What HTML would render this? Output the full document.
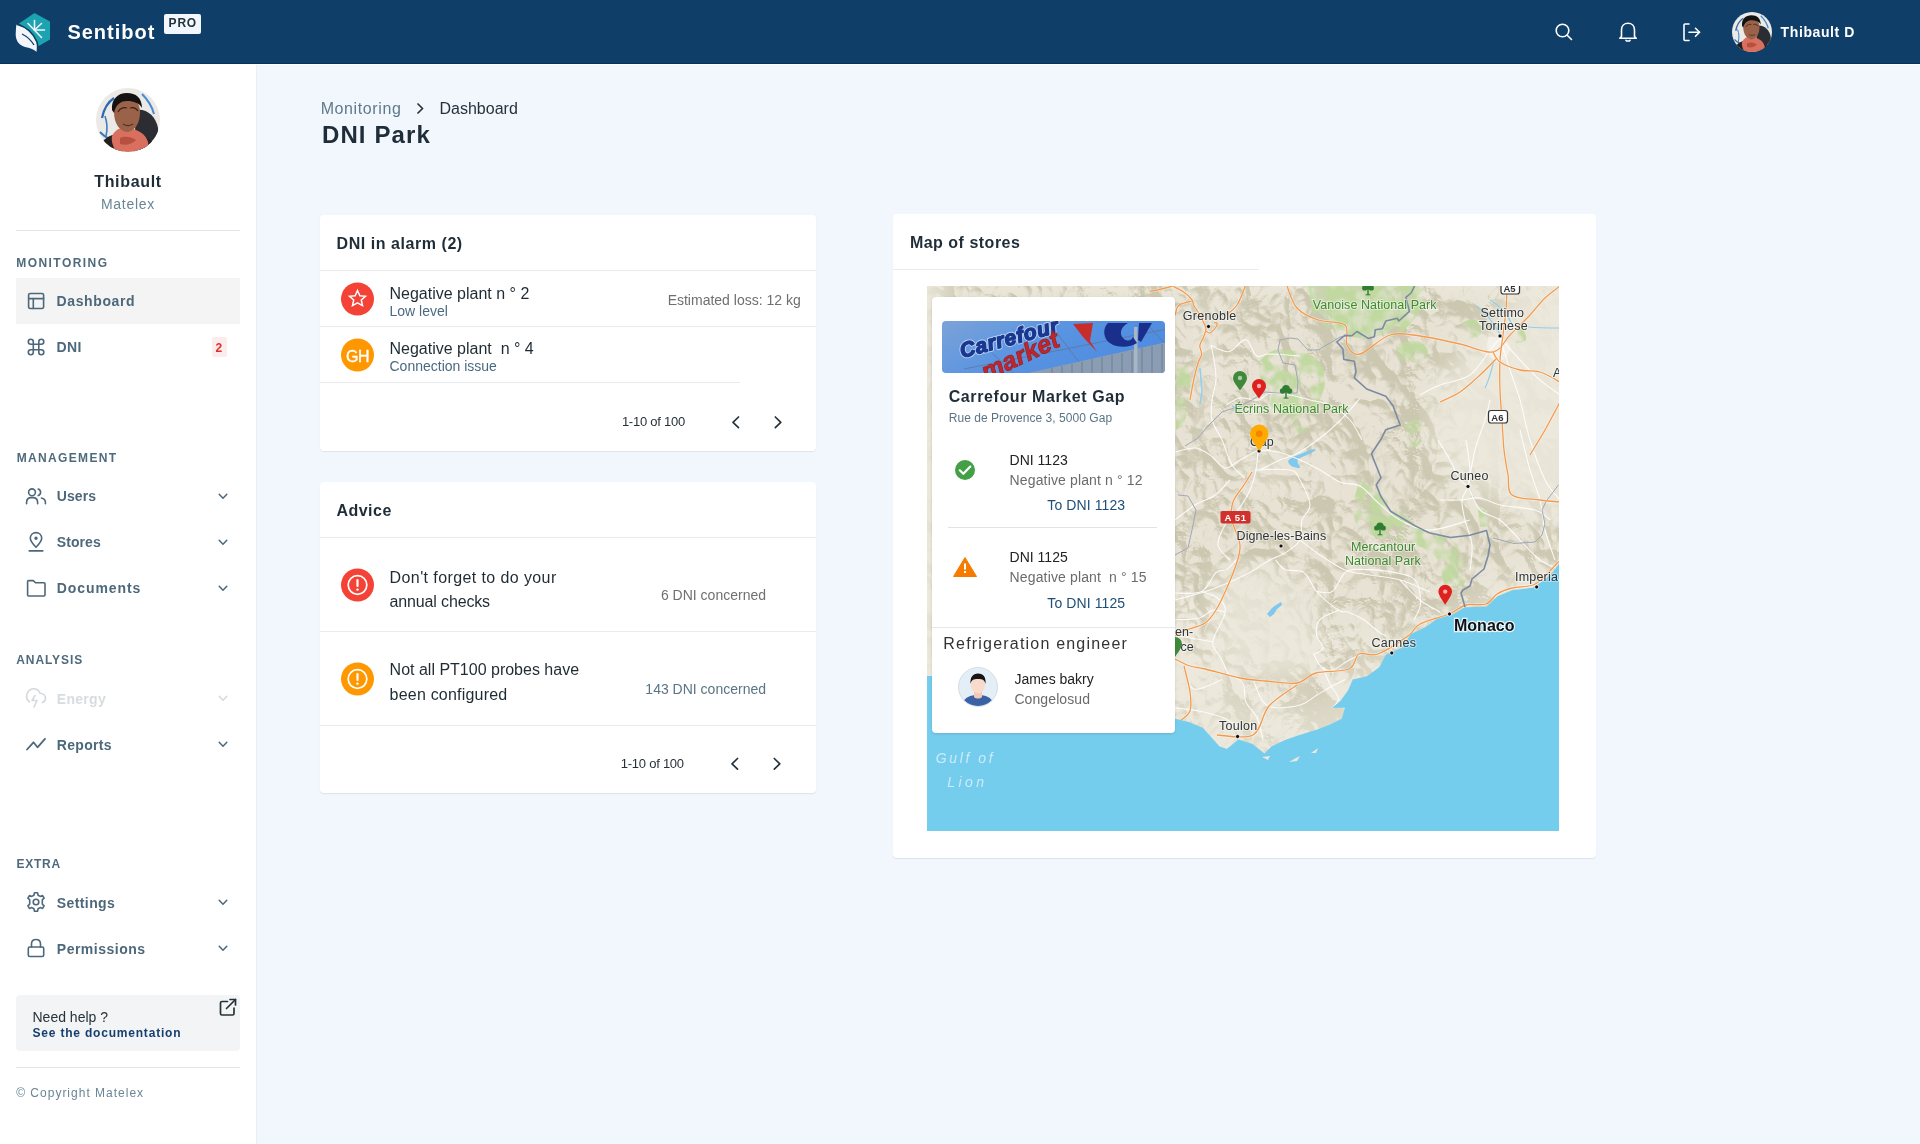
<!DOCTYPE html>
<html><head><meta charset="utf-8">
<style>
*{margin:0;padding:0;box-sizing:border-box}
html,body{width:1920px;height:1144px;overflow:hidden}
body{position:relative;will-change:transform;background:#F2F6FD;font-family:"Liberation Sans",sans-serif;color:#1F2D38}
.a{position:absolute;white-space:pre;line-height:1}
.hdr{position:absolute;left:0;top:0;width:1920px;height:64px;background:#0F3F68}
.side{position:absolute;left:0;top:64px;width:256px;height:1080px;background:#FFFFFF}
.card{position:absolute;background:#fff;border-radius:4px;box-shadow:0 1px 1px rgba(40,60,90,0.10)}
.hr{position:absolute;height:1px;background:#E9EBEE}
svg{position:absolute;overflow:visible}
</style></head><body>
<div class="hdr"></div>
<div style="position:absolute;left:0;top:63px;width:1920px;height:1px;background:#02325F"></div>
<div style="position:absolute;left:0;top:64px;width:1920px;height:1px;background:#fff"></div>
<svg style="left:0;top:0" width="64" height="64" viewBox="0 0 64 64">
<polygon points="34.5,13 50,21.5 50,39.5 37,47 29,30 19,23.5" fill="#1BA3B0"/>
<path d="M16.5 24.5 C26 27 33 33.5 36.5 42 C37.5 45 37 49 36.8 52 C33 49 30 48 25 47 C18 45 15 39 15.8 32 C16 29 16 26.5 16.5 24.5 Z" fill="#F2F5FC"/>
<path d="M16.8 24.2 C26.5 26.8 33.6 33.4 37 42 C38 45 37.6 49 37.4 52.5" fill="none" stroke="#0F3F68" stroke-width="1.6"/>
<path d="M22 34 C27 36.5 31 40 34 45" fill="none" stroke="#0F3F68" stroke-width="1.3"/>
<g stroke="#F2F5FC" stroke-width="1.5" stroke-linecap="round">
<line x1="34.5" y1="20.5" x2="34.5" y2="30"/>
<line x1="28" y1="23.5" x2="41.5" y2="37.5"/>
<line x1="34.5" y1="30" x2="44.5" y2="30"/>
<line x1="34.5" y1="30" x2="41.5" y2="23.5"/>
</g>
</svg>
<div class="a" style="left:67.4px;top:21.9px;font-size:20px;color:#FFFFFF;font-weight:700;letter-spacing:1.0px;">Sentibot</div>
<div style="position:absolute;left:163.5px;top:14px;width:37.5px;height:19.5px;background:#F2F6FD;border-radius:2px"></div>
<div class="a" style="left:168.6px;top:17.2px;font-size:12px;color:#23313B;font-weight:700;letter-spacing:0.8px;">PRO</div>
<svg style="left:0;top:0" width="1" height="1">
<g fill="none" stroke="#FFFFFF" stroke-width="1.6" stroke-linecap="round" stroke-linejoin="round">
<circle cx="1562.5" cy="30.5" r="6.3"/>
<line x1="1567.2" y1="35.2" x2="1571.5" y2="39.5"/>
<path d="M1621.5 36.5 L1621.5 30 C1621.5 26 1624.3 23.3 1628 23.3 C1631.7 23.3 1634.5 26 1634.5 30 L1634.5 36.5 L1636.2 38.3 L1619.8 38.3 Z"/>
<path d="M1626 40.3 C1626.5 41.3 1629.5 41.3 1630 40.3"/>
<path d="M1689 24 L1685 24 C1684.3 24 1684 24.3 1684 25 L1684 39.5 C1684 40.2 1684.3 40.5 1685 40.5 L1689 40.5"/>
<line x1="1689" y1="32.3" x2="1699.5" y2="32.3"/>
<path d="M1695.5 28.3 L1699.5 32.3 L1695.5 36.3"/>
</g>
</svg>
<div class="a" style="left:1780.6px;top:25.0px;font-size:14px;color:#FFFFFF;font-weight:700;letter-spacing:0.6px;">Thibault D</div>
<div class="side"></div>
<div style="position:absolute;left:256px;top:65px;width:1px;height:1079px;background:#E9EEF7"></div>
<div style="position:absolute;left:96px;top:88px;width:64px;height:64px;border-radius:50%;overflow:hidden">
<svg style="left:0;top:0" width="64" height="64" viewBox="0 0 64 64"><rect width="64" height="64" fill="#ECEAE6"/>
<path d="M6 30 C8 20 12 14 18 10" stroke="#2F69B0" stroke-width="2.2" fill="none"/>
<path d="M10 48 C12 40 11 34 9 28" stroke="#3C7FC2" stroke-width="1.6" fill="none"/>
<path d="M46 6 C52 12 56 18 58 26" stroke="#4A8AD0" stroke-width="2" fill="none"/>
<path d="M54 30 C58 36 60 42 60 50" stroke="#2E5E98" stroke-width="2" fill="none"/>
<path d="M4 44 C10 50 14 52 20 50" stroke="#3A78BC" stroke-width="2" fill="none"/>
<path d="M40 22 C50 20 60 28 62 40 L64 64 L38 64 Z" fill="#2B2D33"/>
<path d="M2 64 C4 54 10 48 20 46 L30 46 L26 64 Z" fill="#231F1E"/>
<path d="M46 48 C54 50 60 56 62 64 L44 64 Z" fill="#262322"/>
<path d="M16 48 C20 40 28 38 34 40 C42 42 50 46 52 54 C53 58 52 62 50 64 L20 64 C17 58 15 53 16 48 Z" fill="#D9705F"/>
<path d="M24 50 C28 48 34 48 40 52 C36 56 30 58 24 56 Z" fill="#B7503F"/>
<path d="M18 24 C18 14 24 10 31 10 C39 10 44 15 44 24 C44 34 40 42 32 44 C24 44 18 36 18 24 Z" fill="#9A6248"/>
<path d="M22 24 C24 20 28 19 31 20 M34 20 C37 19 40 20 42 23" stroke="#3A2418" stroke-width="1.2" fill="none"/>
<path d="M27 36 C30 38 34 38 37 36" stroke="#5A3022" stroke-width="1.3" fill="none"/>
<path d="M16 22 C15 11 22 5 31 5 C40 5 46 10 46 20 C43 15 38 13 31 13 C25 13 20 16 18 25 Z" fill="#151212"/>
</svg></div>
<div style="position:absolute;left:1732px;top:12px;width:40px;height:40px;border-radius:50%;overflow:hidden">
<svg style="left:0;top:0" width="40" height="40" viewBox="0 0 64 64"><rect width="64" height="64" fill="#ECEAE6"/>
<path d="M6 30 C8 20 12 14 18 10" stroke="#2F69B0" stroke-width="2.2" fill="none"/>
<path d="M10 48 C12 40 11 34 9 28" stroke="#3C7FC2" stroke-width="1.6" fill="none"/>
<path d="M46 6 C52 12 56 18 58 26" stroke="#4A8AD0" stroke-width="2" fill="none"/>
<path d="M54 30 C58 36 60 42 60 50" stroke="#2E5E98" stroke-width="2" fill="none"/>
<path d="M4 44 C10 50 14 52 20 50" stroke="#3A78BC" stroke-width="2" fill="none"/>
<path d="M40 22 C50 20 60 28 62 40 L64 64 L38 64 Z" fill="#2B2D33"/>
<path d="M2 64 C4 54 10 48 20 46 L30 46 L26 64 Z" fill="#231F1E"/>
<path d="M46 48 C54 50 60 56 62 64 L44 64 Z" fill="#262322"/>
<path d="M16 48 C20 40 28 38 34 40 C42 42 50 46 52 54 C53 58 52 62 50 64 L20 64 C17 58 15 53 16 48 Z" fill="#D9705F"/>
<path d="M24 50 C28 48 34 48 40 52 C36 56 30 58 24 56 Z" fill="#B7503F"/>
<path d="M18 24 C18 14 24 10 31 10 C39 10 44 15 44 24 C44 34 40 42 32 44 C24 44 18 36 18 24 Z" fill="#9A6248"/>
<path d="M22 24 C24 20 28 19 31 20 M34 20 C37 19 40 20 42 23" stroke="#3A2418" stroke-width="1.2" fill="none"/>
<path d="M27 36 C30 38 34 38 37 36" stroke="#5A3022" stroke-width="1.3" fill="none"/>
<path d="M16 22 C15 11 22 5 31 5 C40 5 46 10 46 20 C43 15 38 13 31 13 C25 13 20 16 18 25 Z" fill="#151212"/>
</svg></div>
<div class="a" style="left:-72.0px;width:400px;text-align:center;top:174.4px;font-size:16px;color:#1F2D38;font-weight:700;letter-spacing:0.68px;">Thibault</div>
<div class="a" style="left:-72.0px;width:400px;text-align:center;top:197.1px;font-size:14px;color:#6A8596;letter-spacing:0.74px;">Matelex</div>
<div class="hr" style="left:16px;top:230px;width:224px;background:#E3E5E8"></div>
<div class="a" style="left:16.2px;top:256.8px;font-size:12px;color:#4F6A7C;font-weight:700;letter-spacing:1.45px;">MONITORING</div>
<div style="position:absolute;left:16px;top:278px;width:224px;height:46px;background:#F4F4F4"></div>
<div class="a" style="left:56.6px;top:294.1px;font-size:14px;color:#4D687B;font-weight:700;letter-spacing:0.6px;">Dashboard</div>
<div class="a" style="left:56.6px;top:340.1px;font-size:14px;color:#4D687B;font-weight:700;letter-spacing:0.3px;">DNI</div>
<div style="position:absolute;left:212px;top:337px;width:15px;height:20px;background:#FDECEC;border-radius:2px"></div>
<div class="a" style="left:215.5px;top:341.8px;font-size:12px;color:#E0302B;font-weight:700;">2</div>
<div class="a" style="left:16.7px;top:452.1px;font-size:12px;color:#4F6A7C;font-weight:700;letter-spacing:1.35px;">MANAGEMENT</div>
<div class="a" style="left:56.8px;top:489.1px;font-size:14px;color:#4D687B;font-weight:700;letter-spacing:0.05px;">Users</div>
<div class="a" style="left:56.8px;top:535.1px;font-size:14px;color:#4D687B;font-weight:700;letter-spacing:0.08px;">Stores</div>
<div class="a" style="left:56.8px;top:581.1px;font-size:14px;color:#4D687B;font-weight:700;letter-spacing:0.9px;">Documents</div>
<div class="a" style="left:16.3px;top:654.2px;font-size:12px;color:#4F6A7C;font-weight:700;letter-spacing:0.9px;">ANALYSIS</div>
<div class="a" style="left:56.8px;top:692.3px;font-size:14px;color:#D8DCDF;font-weight:700;letter-spacing:0.3px;">Energy</div>
<div class="a" style="left:56.8px;top:738.1px;font-size:14px;color:#4D687B;font-weight:700;letter-spacing:0.3px;">Reports</div>
<div class="a" style="left:16.5px;top:858.2px;font-size:12px;color:#4F6A7C;font-weight:700;letter-spacing:0.75px;">EXTRA</div>
<div class="a" style="left:56.8px;top:895.9px;font-size:14px;color:#4D687B;font-weight:700;letter-spacing:0.4px;">Settings</div>
<div class="a" style="left:56.8px;top:941.8px;font-size:14px;color:#4D687B;font-weight:700;letter-spacing:0.5px;">Permissions</div>
<div style="position:absolute;left:16px;top:995px;width:224px;height:56px;background:#F3F4F6;border-radius:4px"></div>
<div class="a" style="left:32.5px;top:1010.1px;font-size:14px;color:#26323A;">Need help ?</div>
<div class="a" style="left:32.5px;top:1026.7px;font-size:12px;color:#143F6E;font-weight:700;letter-spacing:0.8px;">See the documentation</div>
<div class="hr" style="left:16px;top:1067px;width:224px;background:#E3E5E8"></div>
<svg style="left:0;top:0" width="1" height="1">
<g fill="none" stroke="#4D687B" stroke-width="1.6" stroke-linecap="round" stroke-linejoin="round">
<!-- dashboard -->
<rect x="28.6" y="293.5" width="15" height="15" rx="1.6"/>
<line x1="28.6" y1="298.6" x2="43.6" y2="298.6"/>
<line x1="33.3" y1="298.6" x2="33.3" y2="308.5"/>
<!-- DNI command -->
<path d="M33.3 344.3 L38.8 344.3 L38.8 349.8 L33.3 349.8 Z"/>
<path d="M33.3 344.3 L33.3 341.8 A2.5 2.5 0 1 0 30.8 344.3 Z"/>
<path d="M38.8 344.3 L38.8 341.8 A2.5 2.5 0 1 1 41.3 344.3 Z"/>
<path d="M33.3 349.8 L33.3 352.3 A2.5 2.5 0 1 1 30.8 349.8 Z"/>
<path d="M38.8 349.8 L38.8 352.3 A2.5 2.5 0 1 0 41.3 349.8 Z"/>
<!-- users -->
<circle cx="32" cy="492.3" r="3.4"/>
<path d="M26.6 503.8 L26.6 502.3 C26.6 499.3 28.6 497.6 31.3 497.6 L32.8 497.6 C35.6 497.6 37.6 499.3 37.6 502.3 L37.6 503.8"/>
<path d="M38.2 489 C40 489.6 40.6 491 40.6 492.3 C40.6 493.6 40 495 38.2 495.6"/>
<path d="M41.5 498 C44 498.6 45.4 500.3 45.4 502.3 L45.4 503.8"/>
<!-- stores -->
<path d="M36 547.3 C36 547.3 30.3 541.5 30.3 538.3 C30.3 535 32.8 532.6 36 532.6 C39.2 532.6 41.7 535 41.7 538.3 C41.7 541.5 36 547.3 36 547.3 Z"/>
<circle cx="36" cy="538.3" r="0.9" fill="#4D687B"/>
<line x1="29.3" y1="550.8" x2="42.7" y2="550.8" stroke-width="1.8"/>
<!-- documents -->
<path d="M27.6 581.5 C27.6 580.9 28 580.6 28.6 580.6 L33.3 580.6 L35.5 582.8 L44 582.8 C44.6 582.8 45 583.2 45 583.8 L45 595 C45 595.6 44.6 596 44 596 L28.6 596 C28 596 27.6 595.6 27.6 595 Z"/>
<!-- reports -->
<polyline points="27,749.5 33.5,742.3 37.5,747.3 45,738.8" stroke-width="1.8"/>
<!-- settings gear -->
<circle cx="36" cy="902" r="2.8"/>
<path d="M34.5 892.8 L37.5 892.8 L38.1 895.2 L40.2 896.4 L42.6 895.6 L44.1 898.2 L42.3 899.9 L42.3 904.1 L44.1 905.8 L42.6 908.4 L40.2 907.6 L38.1 908.8 L37.5 911.2 L34.5 911.2 L33.9 908.8 L31.8 907.6 L29.4 908.4 L27.9 905.8 L29.7 904.1 L29.7 899.9 L27.9 898.2 L29.4 895.6 L31.8 896.4 L33.9 895.2 Z"/>
<!-- permissions lock -->
<rect x="28.3" y="947" width="15.4" height="9.5" rx="1.5"/>
<path d="M31.5 947 L31.5 944 C31.5 941 33.5 939.5 36 939.5 C38.5 939.5 40.5 941 40.5 944 L40.5 947"/>
<!-- chevrons -->
<g stroke-width="1.5">
<polyline points="219.2,494.3 223,498.3 226.8,494.3"/>
<polyline points="219.2,540.3 223,544.3 226.8,540.3"/>
<polyline points="219.2,586.3 223,590.3 226.8,586.3"/>
<polyline points="219.2,742.3 223,746.3 226.8,742.3"/>
<polyline points="219.2,900.3 223,904.3 226.8,900.3"/>
<polyline points="219.2,946.3 223,950.3 226.8,946.3"/>
</g>
</g>
<g fill="none" stroke="#D5D9DC" stroke-width="1.6" stroke-linecap="round" stroke-linejoin="round">
<path d="M29.5 702 C27.5 700.5 26.6 698.8 26.6 696.5 C26.6 692 29.8 688.8 33.5 688.8 C36.5 688.8 39 690.6 40 693.2 C43.3 693.3 45.5 695.5 45.5 698.3 C45.5 700.3 44.5 701.8 42.5 702.6"/>
<polyline points="35,695.5 32,700.5 37,700.5 34,707"/>
<polyline points="219.2,696.3 223,700.3 226.8,696.3" stroke-width="1.5"/>
</g>
<!-- external link icon -->
<g fill="none" stroke="#26323A" stroke-width="1.7" stroke-linecap="round" stroke-linejoin="round">
<path d="M227.5 1001.5 L222 1001.5 C221 1001.5 220.5 1002 220.5 1003 L220.5 1013.5 C220.5 1014.5 221 1015 222 1015 L232.5 1015 C233.5 1015 234 1014.5 234 1013.5 L234 1008"/>
<line x1="226.5" y1="1008.5" x2="235.5" y2="999.5"/>
<polyline points="230,999.5 235.5,999.5 235.5,1005"/>
</g>
</svg>
<div class="a" style="left:16.2px;top:1086.8px;font-size:12px;color:#6A8596;letter-spacing:1.0px;">© Copyright Matelex</div>
<div class="a" style="left:320.7px;top:101.4px;font-size:16px;color:#5F7A8A;letter-spacing:0.6px;">Monitoring</div>
<svg style="left:0;top:0" width="1" height="1"><path d="M417.5 103.5 L422.5 108.5 L417.5 113.5" fill="none" stroke="#26323A" stroke-width="1.6"/></svg>
<div class="a" style="left:439.5px;top:101.4px;font-size:16px;color:#26323A;">Dashboard</div>
<div class="a" style="left:322.0px;top:122.6px;font-size:24px;color:#1F2D38;font-weight:700;letter-spacing:1.1px;">DNI Park</div>
<div class="card" style="left:320px;top:215px;width:496px;height:236px"></div>
<div class="a" style="left:336.6px;top:236.4px;font-size:16px;color:#1F2D38;font-weight:700;letter-spacing:0.55px;">DNI in alarm (2)</div>
<div class="hr" style="left:320px;top:270px;width:496px"></div>
<div class="hr" style="left:320px;top:326px;width:496px"></div>
<div class="hr" style="left:320px;top:382px;width:420px"></div>
<div class="a" style="left:389.5px;top:285.6px;font-size:16px;color:#1F2B33;">Negative plant n ° 2</div>
<div class="a" style="left:389.5px;top:303.9px;font-size:14px;color:#4A6A80;">Low level</div>
<div class="a" style="right:1119.3px;top:293.1px;font-size:14px;color:#6F6F6F;">Estimated loss: 12 kg</div>
<div class="a" style="left:389.5px;top:341.3px;font-size:16px;color:#1F2B33;">Negative plant &nbsp;n ° 4</div>
<div class="a" style="left:389.5px;top:358.7px;font-size:14px;color:#4A6A80;">Connection issue</div>
<div class="a" style="left:621.9px;top:415.3px;font-size:13px;color:#26323A;letter-spacing:-0.25px;">1-10 of 100</div>
<svg style="left:0;top:0" width="1" height="1">
<circle cx="357.5" cy="299" r="16.5" fill="#F44336"/>
<path d="M357.5 290.5 L359.9 295.7 L365.5 296.3 L361.3 300 L362.5 305.6 L357.5 302.8 L352.5 305.6 L353.7 300 L349.5 296.3 L355.1 295.7 Z" fill="none" stroke="#fff" stroke-width="1.5" stroke-linejoin="miter"/>
<circle cx="357.5" cy="355" r="16.5" fill="#FF9800"/>
<g fill="none" stroke="#26323A" stroke-width="1.7" stroke-linecap="round" stroke-linejoin="round">
<polyline points="738.5,417 733,422.3 738.5,427.6"/>
<polyline points="775.3,417 780.8,422.3 775.3,427.6"/>
</g>
</svg>
<div class="a" style="left:340px;top:349.4px;width:35px;text-align:center;font-size:16px;font-weight:400;color:#fff;letter-spacing:-0.5px;-webkit-text-stroke:0.35px #fff">GH</div>
<div class="card" style="left:320px;top:482px;width:496px;height:311px"></div>
<div class="a" style="left:336.4px;top:503.4px;font-size:16px;color:#1F2D38;font-weight:700;letter-spacing:0.5px;">Advice</div>
<div class="hr" style="left:320px;top:537px;width:496px"></div>
<div class="hr" style="left:320px;top:631px;width:496px"></div>
<div class="hr" style="left:320px;top:725px;width:496px"></div>
<div class="a" style="left:389.6px;top:569.7px;font-size:16px;color:#1F2B33;letter-spacing:0.4px;">Don't forget to do your</div>
<div class="a" style="left:389.6px;top:594.4px;font-size:16px;color:#1F2B33;letter-spacing:-0.15px;">annual checks</div>
<div class="a" style="right:1154.0px;top:588.1px;font-size:14px;color:#707070;">6 DNI concerned</div>
<div class="a" style="left:389.6px;top:662.4px;font-size:16px;color:#1F2B33;">Not all PT100 probes have</div>
<div class="a" style="left:389.6px;top:687.2px;font-size:16px;color:#1F2B33;letter-spacing:0.2px;">been configured</div>
<div class="a" style="right:1154.0px;top:681.9px;font-size:14px;color:#5A7486;">143 DNI concerned</div>
<div class="a" style="left:620.8px;top:757.0px;font-size:13px;color:#26323A;letter-spacing:-0.25px;">1-10 of 100</div>
<svg style="left:0;top:0" width="1" height="1">
<circle cx="357.5" cy="585" r="16.5" fill="#F44336"/>
<circle cx="357.5" cy="585" r="9.3" fill="none" stroke="#fff" stroke-width="1.7"/>
<line x1="357.5" y1="580" x2="357.5" y2="586" stroke="#fff" stroke-width="2.2" stroke-linecap="round"/>
<circle cx="357.5" cy="589.6" r="1.2" fill="#fff"/>
<circle cx="357.5" cy="679" r="16.5" fill="#FF9800"/>
<circle cx="357.5" cy="679" r="9.3" fill="none" stroke="#fff" stroke-width="1.7"/>
<line x1="357.5" y1="674" x2="357.5" y2="680" stroke="#fff" stroke-width="2.2" stroke-linecap="round"/>
<circle cx="357.5" cy="683.6" r="1.2" fill="#fff"/>
<g fill="none" stroke="#26323A" stroke-width="1.7" stroke-linecap="round" stroke-linejoin="round">
<polyline points="737.5,758.5 732,763.8 737.5,769.1"/>
<polyline points="774.3,758.5 779.8,763.8 774.3,769.1"/>
</g>
</svg>
<div class="card" style="left:893px;top:214px;width:703px;height:644px"></div>
<div class="a" style="left:909.9px;top:235.4px;font-size:16px;color:#1F2D38;font-weight:700;letter-spacing:0.5px;">Map of stores</div>
<div class="hr" style="left:893px;top:269px;width:366px"></div>
<svg style="left:0;top:0" width="1920" height="1144" viewBox="0 0 1920 1144">
<defs>
<clipPath id="mc"><rect x="927" y="286" width="632" height="545"/></clipPath>
<filter id="relief" x="900" y="260" width="700" height="600" filterUnits="userSpaceOnUse" color-interpolation-filters="sRGB"><feTurbulence type="turbulence" baseFrequency="0.012 0.010" numOctaves="4" seed="11" result="n"/><feColorMatrix in="n" type="matrix" values="0 0 0 0 0  0 0 0 0 0  0 0 0 0 0  -1 0 0 0 1" result="h0"/><feGaussianBlur in="h0" stdDeviation="0.7" result="h"/><feDiffuseLighting in="h" surfaceScale="30" diffuseConstant="1" lighting-color="#fff" result="L"><feDistantLight azimuth="300" elevation="55"/></feDiffuseLighting><feColorMatrix in="L" type="matrix" values="0 0 0 0 0.80  0 0 0 0 0.78  0 0 0 0 0.69  -1.9 0 0 0 1.55" result="c"/><feComposite in="c" in2="SourceGraphic" operator="in"/></filter>
<filter id="patchy" x="900" y="260" width="700" height="600" filterUnits="userSpaceOnUse" color-interpolation-filters="sRGB"><feTurbulence type="fractalNoise" baseFrequency="0.07" numOctaves="2" seed="5" result="n"/><feColorMatrix in="n" type="matrix" values="0 0 0 0 0.75  0 0 0 0 0.85  0 0 0 0 0.62  4 0 0 0 -1.5" result="c"/><feComposite in="c" in2="SourceGraphic" operator="in"/></filter>
<filter id="blur8"><feGaussianBlur stdDeviation="14"/></filter>
<filter id="halo"><feMorphology operator="dilate" radius="1"/></filter>
</defs>
<g clip-path="url(#mc)">
<rect x="927" y="286" width="632" height="545" fill="#ECE8DC"/>
<path d="M927.0 286.0 C1012.5 286.0 1343.7 283.7 1440.0 286.0 C1536.3 288.3 1498.3 290.2 1505.0 300.0 C1511.7 309.8 1490.8 330.8 1480.0 345.0 C1469.2 359.2 1448.0 369.2 1440.0 385.0 C1432.0 400.8 1427.0 421.7 1432.0 440.0 C1437.0 458.3 1448.7 483.3 1470.0 495.0 C1491.3 506.7 1545.0 496.7 1560.0 510.0 C1575.0 523.3 1573.3 561.7 1560.0 575.0 C1546.7 588.3 1501.7 584.2 1480.0 590.0 C1458.3 595.8 1443.3 601.7 1430.0 610.0 C1416.7 618.3 1421.7 637.5 1400.0 640.0 C1378.3 642.5 1326.7 633.3 1300.0 625.0 C1273.3 616.7 1260.8 596.7 1240.0 590.0 C1219.2 583.3 1227.2 590.0 1175.0 585.0 C1122.8 580.0 968.3 564.2 927.0 560.0 Z" fill="#DCD7C3" opacity="0.30" filter="url(#blur8)"/>
<g filter="url(#relief)">
<rect x="887" y="246" width="712" height="625" fill="#000"/>
</g>
<path d="M1438.0 446.0 C1437.7 437.5 1432.0 410.7 1436.0 395.0 C1440.0 379.3 1453.7 361.3 1462.0 352.0 C1470.3 342.7 1479.7 346.5 1486.0 339.0 C1492.3 331.5 1495.0 315.8 1500.0 307.0 C1505.0 298.2 1502.7 289.5 1516.0 286.0 C1529.3 282.5 1569.3 249.5 1580.0 286.0 C1590.7 322.5 1590.0 468.5 1580.0 505.0 C1570.0 541.5 1536.7 507.5 1520.0 505.0 C1503.3 502.5 1491.3 495.8 1480.0 490.0 C1468.7 484.2 1456.7 473.3 1452.0 470.0 Z" fill="#ECE8DC" opacity="0.9" filter="url(#blur8)"/>
<path d="M1214.0 578.0 C1222.0 576.3 1247.7 567.2 1262.0 568.0 C1276.3 568.8 1290.7 572.7 1300.0 583.0 C1309.3 593.3 1316.0 614.5 1318.0 630.0 C1320.0 645.5 1323.0 667.5 1312.0 676.0 C1301.0 684.5 1267.0 683.3 1252.0 681.0 C1237.0 678.7 1229.0 671.8 1222.0 662.0 C1215.0 652.2 1212.0 628.7 1210.0 622.0 Z" fill="#ECE8DC" opacity="0.8" filter="url(#blur8)"/>
<path d="M1175.0 640.0 C1180.0 641.7 1194.2 641.7 1205.0 650.0 C1215.8 658.3 1224.2 681.7 1240.0 690.0 C1255.8 698.3 1283.3 700.0 1300.0 700.0 C1316.7 700.0 1331.7 696.7 1340.0 690.0 C1348.3 683.3 1343.3 666.7 1350.0 660.0 C1356.7 653.3 1368.3 655.0 1380.0 650.0 C1391.7 645.0 1390.0 642.0 1420.0 630.0 C1450.0 618.0 1536.7 544.5 1560.0 578.0 C1583.3 611.5 1665.5 788.8 1560.0 831.0 C1454.5 873.2 1032.5 862.8 927.0 831.0 C821.5 799.2 927.0 671.8 927.0 640.0 Z" fill="#ECE8DC" opacity="0.55" filter="url(#blur8)"/>
<path d="M1196.0 300.0 C1199.2 300.0 1211.0 290.0 1215.0 300.0 C1219.0 310.0 1220.0 340.0 1220.0 360.0 C1220.0 380.0 1218.3 408.3 1215.0 420.0 C1211.7 431.7 1202.5 428.3 1200.0 430.0 Z" fill="#ECE8DC" opacity="0.6" filter="url(#blur8)"/>
<path d="M1240.0 455.0 C1246.7 454.2 1270.0 447.5 1280.0 450.0 C1290.0 452.5 1301.7 463.3 1300.0 470.0 C1298.3 476.7 1279.2 487.5 1270.0 490.0 C1260.8 492.5 1249.2 485.8 1245.0 485.0 Z" fill="#ECE8DC" opacity="0.5" filter="url(#blur8)"/>
<path d="M900.0 260.0 C907.5 260.0 937.5 186.7 945.0 260.0 C952.5 333.3 952.5 626.7 945.0 700.0 C937.5 773.3 907.5 700.0 900.0 700.0 Z" fill="#ECE8DC" opacity="0.85" filter="url(#blur8)"/>
<path d="M1306.0 286.0 C1324.3 286.0 1398.0 283.7 1416.0 286.0 C1434.0 288.3 1416.7 294.0 1414.0 300.0 C1411.3 306.0 1406.0 316.0 1400.0 322.0 C1394.0 328.0 1386.3 334.2 1378.0 336.0 C1369.7 337.8 1358.0 335.3 1350.0 333.0 C1342.0 330.7 1336.3 326.5 1330.0 322.0 C1323.7 317.5 1315.0 308.7 1312.0 306.0 Z" fill="#C9DFB0" opacity="0.55"/>
<g filter="url(#patchy)" opacity="0.9">
<path d="M1309.0 286.0 C1327.5 286.0 1400.7 283.7 1420.0 286.0 C1439.3 288.3 1426.3 294.0 1425.0 300.0 C1423.7 306.0 1417.0 316.3 1412.0 322.0 C1407.0 327.7 1403.7 331.3 1395.0 334.0 C1386.3 336.7 1370.8 338.7 1360.0 338.0 C1349.2 337.3 1338.0 334.3 1330.0 330.0 C1322.0 325.7 1315.0 315.0 1312.0 312.0 Z" fill="#000"/>
<path d="M1258.0 362.0 C1260.8 360.0 1268.0 351.7 1275.0 350.0 C1282.0 348.3 1292.8 350.3 1300.0 352.0 C1307.2 353.7 1313.8 355.3 1318.0 360.0 C1322.2 364.7 1324.7 373.3 1325.0 380.0 C1325.3 386.7 1322.5 392.5 1320.0 400.0 C1317.5 407.5 1313.3 419.2 1310.0 425.0 C1306.7 430.8 1303.3 435.8 1300.0 435.0 C1296.7 434.2 1295.0 425.0 1290.0 420.0 C1285.0 415.0 1274.7 410.0 1270.0 405.0 C1265.3 400.0 1263.3 392.5 1262.0 390.0 Z" fill="#000"/>
<path d="M1360.0 480.0 C1364.2 483.0 1375.0 490.0 1385.0 498.0 C1395.0 506.0 1408.3 520.7 1420.0 528.0 C1431.7 535.3 1447.3 533.3 1455.0 542.0 C1462.7 550.7 1467.5 572.7 1466.0 580.0 C1464.5 587.3 1450.7 589.3 1446.0 586.0 C1441.3 582.7 1442.7 566.7 1438.0 560.0 C1433.3 553.3 1426.0 549.3 1418.0 546.0 C1410.0 542.7 1399.7 542.7 1390.0 540.0 C1380.3 537.3 1366.3 535.8 1360.0 530.0 C1353.7 524.2 1353.3 509.2 1352.0 505.0 Z" fill="#000"/>
<path d="M1478.0 510.0 C1480.0 510.3 1487.5 509.5 1490.0 512.0 C1492.5 514.5 1494.7 522.5 1493.0 525.0 C1491.3 527.5 1482.2 526.7 1480.0 527.0 Z" fill="#000"/>
<path d="M1395.0 344.0 C1398.8 343.5 1412.5 339.7 1418.0 341.0 C1423.5 342.3 1427.7 348.5 1428.0 352.0 C1428.3 355.5 1425.0 360.7 1420.0 362.0 C1415.0 363.3 1401.7 360.3 1398.0 360.0 Z" fill="#000"/>
<path d="M1404.0 425.0 C1406.3 424.2 1414.8 417.5 1418.0 420.0 C1421.2 422.5 1424.3 435.0 1423.0 440.0 C1421.7 445.0 1412.2 448.3 1410.0 450.0 Z" fill="#000"/>
<path d="M1462.0 322.0 C1464.3 321.7 1472.8 318.0 1476.0 320.0 C1479.2 322.0 1482.3 330.7 1481.0 334.0 C1479.7 337.3 1470.2 339.0 1468.0 340.0 Z" fill="#000"/>
<path d="M1513.0 330.0 C1514.5 329.7 1519.8 326.3 1522.0 328.0 C1524.2 329.7 1527.0 337.5 1526.0 340.0 C1525.0 342.5 1517.7 342.5 1516.0 343.0 Z" fill="#000"/>
<path d="M1176.0 370.0 C1177.2 368.3 1180.7 358.3 1183.0 360.0 C1185.3 361.7 1189.7 370.0 1190.0 380.0 C1190.3 390.0 1187.3 411.7 1185.0 420.0 C1182.7 428.3 1177.5 428.3 1176.0 430.0 Z" fill="#000"/>
</g>
<path d="M1288 461 C1292 456 1300 455 1305 452 C1310 450 1314 448 1316 450 C1312 453 1304 456 1298 459 C1296 464 1301 466 1300 468 C1294 468 1289 466 1288 461 Z" fill="#7FC8EE"/>
<path d="M1476 306 C1486 312 1492 322 1500 334 M1490 300 C1500 306 1506 312 1512 324 M1528 327 C1540 328 1550 328 1560 328 M1485 388 C1490 378 1492 368 1494 360" fill="none" stroke="#8FD0F0" stroke-width="1.2"/>
<path d="M1200 368 L1202 392 L1200 404 M1232 406 L1240 410" fill="none" stroke="#8FD0F0" stroke-width="1.5"/>
<path d="M1267 614 L1272 608 L1276 605 L1281 602 L1282 605 L1277 609 L1274 614 L1270 617 Z" fill="#7FC8EE"/>
<path d="M1488 338 C1495 335 1505 338 1510 345 C1512 352 1505 360 1498 362 C1490 360 1485 352 1488 338 Z" fill="#F5F2EC" opacity="0.8"/>
<path d="M1211.0 345.0 C1211.5 347.5 1213.2 354.2 1214.0 360.0 C1214.8 365.8 1216.3 373.3 1216.0 380.0 C1215.7 386.7 1212.7 393.3 1212.0 400.0 C1211.3 406.7 1210.3 413.3 1212.0 420.0 C1213.7 426.7 1218.7 432.5 1222.0 440.0 C1225.3 447.5 1228.2 458.7 1232.0 465.0 C1235.8 471.3 1242.8 475.8 1245.0 478.0" fill="none" stroke="#FFFFFF" stroke-width="1.1" opacity="0.85"/>
<path d="M1211.2 345.6 C1214.1 346.6 1223.6 352.4 1228.7 351.7 C1233.8 351.0 1238.6 342.9 1241.8 341.2 C1245.0 339.4 1245.5 338.7 1248.0 341.2 C1250.5 343.7 1253.5 353.8 1256.6 356.0 C1259.6 358.2 1262.9 354.6 1266.3 354.3 C1269.7 354.0 1271.1 354.0 1276.7 354.3 C1282.3 354.6 1296.1 355.7 1300.0 356.0" fill="none" stroke="#FFFFFF" stroke-width="1.1" opacity="0.85"/>
<path d="M1175.0 452.0 C1178.3 451.3 1189.2 447.5 1195.0 448.0 C1200.8 448.5 1205.0 451.7 1210.0 455.0 C1215.0 458.3 1220.0 467.2 1225.0 468.0 C1230.0 468.8 1234.5 462.8 1240.0 460.0 C1245.5 457.2 1251.7 452.3 1258.0 451.0 C1264.3 449.7 1271.0 450.5 1278.0 452.0 C1285.0 453.5 1293.0 457.0 1300.0 460.0 C1307.0 463.0 1313.3 466.3 1320.0 470.0 C1326.7 473.7 1333.3 479.3 1340.0 482.0 C1346.7 484.7 1354.2 483.0 1360.0 486.0 C1365.8 489.0 1372.5 497.7 1375.0 500.0" fill="none" stroke="#FFFFFF" stroke-width="1.1" opacity="0.85"/>
<path d="M1258.0 451.0 C1257.7 454.2 1257.3 463.5 1256.0 470.0 C1254.7 476.5 1253.0 483.3 1250.0 490.0 C1247.0 496.7 1242.2 504.2 1238.0 510.0 C1233.8 515.8 1228.3 519.2 1225.0 525.0 C1221.7 530.8 1217.2 539.2 1218.0 545.0 C1218.8 550.8 1228.0 557.5 1230.0 560.0" fill="none" stroke="#FFFFFF" stroke-width="1.1" opacity="0.85"/>
<path d="M1260.0 470.0 C1263.3 468.3 1273.3 463.0 1280.0 460.0 C1286.7 457.0 1291.7 457.0 1300.0 452.0 C1308.3 447.0 1321.7 437.0 1330.0 430.0 C1338.3 423.0 1345.0 415.3 1350.0 410.0 C1355.0 404.7 1358.3 400.0 1360.0 398.0" fill="none" stroke="#FFFFFF" stroke-width="1.1" opacity="0.85"/>
<path d="M1255.0 470.0 C1260.8 470.0 1282.5 468.3 1290.0 470.0 C1297.5 471.7 1296.7 474.2 1300.0 480.0 C1303.3 485.8 1309.7 498.3 1310.0 505.0 C1310.3 511.7 1303.7 514.2 1302.0 520.0 C1300.3 525.8 1302.8 534.5 1300.0 540.0 C1297.2 545.5 1290.0 549.7 1285.0 553.0 C1280.0 556.3 1276.7 556.3 1270.0 560.0 C1263.3 563.7 1255.0 570.0 1245.0 575.0 C1235.0 580.0 1221.7 585.8 1210.0 590.0 C1198.3 594.2 1180.8 598.3 1175.0 600.0" fill="none" stroke="#FFFFFF" stroke-width="1.1" opacity="0.85"/>
<path d="M1300.0 540.0 C1303.3 542.5 1312.5 550.0 1320.0 555.0 C1327.5 560.0 1336.7 566.7 1345.0 570.0 C1353.3 573.3 1360.8 573.3 1370.0 575.0 C1379.2 576.7 1390.0 577.2 1400.0 580.0 C1410.0 582.8 1425.0 590.0 1430.0 592.0" fill="none" stroke="#FFFFFF" stroke-width="1.1" opacity="0.85"/>
<path d="M1226.0 405.0 C1228.3 403.8 1234.7 398.8 1240.0 398.0 C1245.3 397.2 1253.0 400.8 1258.0 400.0 C1263.0 399.2 1264.7 393.8 1270.0 393.0 C1275.3 392.2 1283.3 393.8 1290.0 395.0 C1296.7 396.2 1303.3 398.3 1310.0 400.0 C1316.7 401.7 1323.3 401.7 1330.0 405.0 C1336.7 408.3 1344.7 414.2 1350.0 420.0 C1355.3 425.8 1360.0 436.7 1362.0 440.0" fill="none" stroke="#FFFFFF" stroke-width="1.1" opacity="0.85"/>
<path d="M1438.0 440.0 C1440.0 443.3 1446.3 453.3 1450.0 460.0 C1453.7 466.7 1457.0 475.5 1460.0 480.0 C1463.0 484.5 1464.7 482.0 1468.0 487.0 C1471.3 492.0 1474.7 504.5 1480.0 510.0 C1485.3 515.5 1493.3 515.0 1500.0 520.0 C1506.7 525.0 1516.7 536.7 1520.0 540.0" fill="none" stroke="#FFFFFF" stroke-width="1.1" opacity="0.85"/>
<path d="M1420.0 395.0 C1423.3 393.3 1431.7 388.3 1440.0 385.0 C1448.3 381.7 1461.7 380.8 1470.0 375.0 C1478.3 369.2 1485.0 356.2 1490.0 350.0 C1495.0 343.8 1498.3 340.0 1500.0 338.0" fill="none" stroke="#FFFFFF" stroke-width="1.1" opacity="0.85"/>
<path d="M1500.0 338.0 C1503.3 341.7 1513.3 353.0 1520.0 360.0 C1526.7 367.0 1533.3 374.2 1540.0 380.0 C1546.7 385.8 1556.7 392.5 1560.0 395.0" fill="none" stroke="#FFFFFF" stroke-width="1.1" opacity="0.85"/>
<path d="M1500.0 338.0 C1501.7 343.3 1506.7 359.7 1510.0 370.0 C1513.3 380.3 1516.7 388.3 1520.0 400.0 C1523.3 411.7 1525.8 426.7 1530.0 440.0 C1534.2 453.3 1540.0 470.0 1545.0 480.0 C1550.0 490.0 1557.5 496.7 1560.0 500.0" fill="none" stroke="#FFFFFF" stroke-width="1.1" opacity="0.85"/>
<path d="M1468.0 487.0 C1469.2 480.8 1472.2 461.2 1475.0 450.0 C1477.8 438.8 1482.5 428.3 1485.0 420.0 C1487.5 411.7 1489.2 403.3 1490.0 400.0" fill="none" stroke="#FFFFFF" stroke-width="1.1" opacity="0.85"/>
<path d="M1375.0 500.0 C1379.2 503.3 1390.8 515.0 1400.0 520.0 C1409.2 525.0 1418.3 530.0 1430.0 530.0 C1441.7 530.0 1463.3 521.7 1470.0 520.0" fill="none" stroke="#FFFFFF" stroke-width="1.1" opacity="0.85"/>
<path d="M1175.0 520.0 C1178.3 517.5 1188.3 509.2 1195.0 505.0 C1201.7 500.8 1209.2 499.2 1215.0 495.0 C1220.8 490.8 1227.5 482.5 1230.0 480.0" fill="none" stroke="#FFFFFF" stroke-width="1.1" opacity="0.85"/>
<path d="M1520.0 540.0 C1523.3 543.3 1533.3 555.0 1540.0 560.0 C1546.7 565.0 1556.7 568.3 1560.0 570.0" fill="none" stroke="#FFFFFF" stroke-width="1.1" opacity="0.85"/>
<path d="M1400.0 580.0 C1403.3 583.3 1413.3 594.7 1420.0 600.0 C1426.7 605.3 1436.7 610.0 1440.0 612.0" fill="none" stroke="#FFFFFF" stroke-width="1.1" opacity="0.85"/>
<path d="M1201.7 591.5 C1204.3 592.5 1213.6 594.4 1217.5 597.8 C1221.4 601.2 1226.1 604.7 1225.3 612.0 C1224.5 619.3 1213.6 634.2 1212.8 641.8 C1212.0 649.4 1218.0 652.0 1220.6 657.5 C1223.2 663.0 1227.2 671.9 1228.5 674.8" fill="none" stroke="#FFFFFF" stroke-width="1.1" opacity="0.85"/>
<path d="M1175.0 593.0 C1179.5 592.8 1194.9 594.9 1201.7 591.5 C1208.5 588.1 1211.8 576.3 1216.0 572.6 C1220.2 568.9 1223.7 571.5 1227.0 569.4 C1230.3 567.3 1234.5 561.6 1236.0 560.0" fill="none" stroke="#FFFFFF" stroke-width="1.1" opacity="0.85"/>
<path d="M1275.7 560.0 C1277.2 561.6 1280.3 567.3 1285.0 569.4 C1289.7 571.5 1298.7 568.9 1304.0 572.6 C1309.3 576.3 1310.8 585.2 1316.6 591.5 C1322.4 597.8 1333.4 606.9 1338.6 610.3 C1343.8 613.7 1343.8 610.4 1348.0 612.0 C1352.2 613.6 1358.5 616.4 1363.8 619.8 C1369.0 623.2 1375.8 629.8 1379.5 632.4 C1383.2 635.0 1384.8 635.0 1385.8 635.5" fill="none" stroke="#FFFFFF" stroke-width="1.1" opacity="0.85"/>
<path d="M1316.6 591.5 C1319.2 591.5 1327.6 594.6 1332.3 591.5 C1337.0 588.4 1340.3 576.3 1345.0 572.6 C1349.7 568.9 1352.2 569.4 1360.6 569.4 C1369.0 569.4 1386.1 570.8 1395.3 572.6 C1404.5 574.5 1411.5 575.3 1415.7 580.5 C1419.9 585.7 1420.7 597.5 1420.4 604.0 C1420.1 610.5 1415.1 617.2 1414.0 619.8" fill="none" stroke="#FFFFFF" stroke-width="1.1" opacity="0.85"/>
<path d="M1313.5 654.4 C1315.1 653.3 1322.5 651.1 1323.0 648.0 C1323.5 644.9 1317.1 640.2 1316.6 635.5 C1316.0 630.8 1316.0 624.0 1319.7 619.8 C1323.4 615.6 1335.4 611.9 1338.6 610.3" fill="none" stroke="#FFFFFF" stroke-width="1.1" opacity="0.85"/>
<path d="M1313.5 654.4 C1314.8 656.5 1318.2 664.4 1321.3 667.0 C1324.4 669.6 1327.8 671.1 1332.3 670.1 C1336.8 669.1 1343.3 663.3 1348.0 660.7 C1352.7 658.1 1358.5 655.5 1360.6 654.4" fill="none" stroke="#FFFFFF" stroke-width="1.1" opacity="0.85"/>
<path d="M1323.0 667.0 C1324.0 669.6 1326.6 677.5 1329.2 682.7 C1331.8 688.0 1338.1 694.3 1338.6 698.5 C1339.1 702.7 1333.3 706.3 1332.3 707.9" fill="none" stroke="#FFFFFF" stroke-width="1.1" opacity="0.85"/>
<path d="M1227.0 673.3 C1229.6 674.9 1239.6 678.0 1242.7 682.7 C1245.8 687.4 1243.5 695.8 1245.8 701.6 C1248.1 707.4 1253.9 710.9 1256.8 717.3 C1259.7 723.7 1262.0 736.2 1263.0 740.0" fill="none" stroke="#FFFFFF" stroke-width="1.1" opacity="0.85"/>
<path d="M1253.7 681.0 C1255.2 684.4 1259.3 697.1 1263.0 701.6 C1266.7 706.1 1269.4 707.4 1275.7 707.9 C1282.0 708.4 1294.1 706.8 1300.9 704.7 C1307.7 702.6 1311.4 698.4 1316.6 695.3 C1321.8 692.2 1327.6 688.5 1332.3 685.9 C1337.0 683.3 1342.9 680.6 1345.0 679.6" fill="none" stroke="#FFFFFF" stroke-width="1.1" opacity="0.85"/>
<path d="M1184.4 667.0 C1186.0 670.7 1187.6 686.9 1193.9 689.0 C1200.2 691.1 1217.5 681.2 1222.2 679.6" fill="none" stroke="#FFFFFF" stroke-width="1.1" opacity="0.85"/>
<path d="M1175.0 707.9 C1178.9 708.4 1190.7 709.4 1198.6 711.0 C1206.5 712.6 1215.6 714.7 1222.2 717.3 C1228.8 719.9 1235.4 725.2 1238.0 726.8" fill="none" stroke="#FFFFFF" stroke-width="1.1" opacity="0.85"/>
<path d="M1212.8 641.8 L1175.0 635.5" fill="none" stroke="#FFFFFF" stroke-width="1.1" opacity="0.85"/>
<path d="M1175.0 619.8 C1178.9 619.5 1192.3 619.8 1198.6 618.2 C1204.9 616.6 1208.3 611.3 1212.8 610.3 C1217.2 609.3 1223.2 611.7 1225.3 612.0" fill="none" stroke="#FFFFFF" stroke-width="1.1" opacity="0.85"/>
<path d="M1466.0 440.0 C1466.7 445.0 1469.7 462.2 1470.0 470.0 C1470.3 477.8 1469.3 482.0 1468.0 487.0 C1466.7 492.0 1462.5 494.5 1462.0 500.0 C1461.5 505.5 1463.3 512.5 1465.0 520.0 C1466.7 527.5 1471.2 536.7 1472.0 545.0 C1472.8 553.3 1470.3 565.8 1470.0 570.0" fill="none" stroke="#FFFFFF" stroke-width="1.1" opacity="0.85"/>
<path d="M1440.0 500.0 C1443.3 500.0 1453.3 500.3 1460.0 500.0 C1466.7 499.7 1473.3 497.2 1480.0 498.0 C1486.7 498.8 1490.8 503.0 1500.0 505.0 C1509.2 507.0 1526.7 507.5 1535.0 510.0 C1543.3 512.5 1547.5 518.3 1550.0 520.0" fill="none" stroke="#FFFFFF" stroke-width="1.1" opacity="0.85"/>
<path d="M1520.0 430.0 C1521.7 436.7 1526.7 458.3 1530.0 470.0 C1533.3 481.7 1537.5 490.0 1540.0 500.0 C1542.5 510.0 1542.5 520.0 1545.0 530.0 C1547.5 540.0 1553.3 555.0 1555.0 560.0" fill="none" stroke="#FFFFFF" stroke-width="1.1" opacity="0.85"/>
<path d="M1185.0 446.0 L1198.0 438.0 L1208.0 426.0 L1222.0 412.0 L1240.0 406.0 L1252.0 400.0 L1265.0 392.0 L1278.0 393.0 L1297.0 393.0 L1298.0 382.0 L1295.0 365.0 L1283.0 363.0 L1278.0 350.0 L1280.0 340.0 L1290.0 338.0 L1298.0 339.0 L1308.0 350.0 L1318.0 350.0 L1330.0 343.0 L1340.0 337.0 L1347.0 336.0" fill="none" stroke="#9FA9BA" stroke-width="1"/>
<path d="M1175.0 555.0 L1188.0 548.0 L1192.0 530.0 L1196.0 510.0 L1188.0 496.0 L1178.0 495.0" fill="none" stroke="#9FA9BA" stroke-width="1"/>
<path d="M1493.0 538.0 L1514.0 543.5 L1535.0 542.0 L1542.0 535.0 L1545.0 524.0 L1542.0 510.0 L1546.0 501.5 L1558.6 484.8" fill="none" stroke="#9FA9BA" stroke-width="1"/>
<path d="M1150.0 291.4 C1151.5 291.1 1154.9 290.5 1158.7 289.6 C1162.5 288.7 1170.4 286.7 1172.7 286.1" fill="none" stroke="#FFFFFF" stroke-width="2.4" opacity="0.55"/>
<path d="M1150.0 291.4 C1151.5 291.1 1154.9 290.5 1158.7 289.6 C1162.5 288.7 1170.4 286.7 1172.7 286.1" fill="none" stroke="#F39A4C" stroke-width="1.3"/>
<path d="M1172.7 286.0 C1174.8 287.2 1181.8 290.7 1185.0 293.0 C1188.2 295.3 1190.5 297.9 1192.0 300.0 C1193.5 302.1 1192.8 303.5 1193.7 305.3 C1194.6 307.1 1195.6 307.8 1197.2 310.6 C1198.8 313.4 1201.8 318.9 1203.3 322.0 C1204.8 325.1 1206.0 326.4 1206.0 329.0 C1206.0 331.6 1204.3 334.9 1203.3 337.7 C1202.3 340.5 1200.1 342.8 1199.8 345.6 C1199.5 348.4 1201.9 351.4 1201.6 354.3 C1201.3 357.2 1199.3 358.7 1198.0 363.0 C1196.7 367.3 1195.0 373.8 1193.7 380.0 C1192.4 386.2 1190.6 396.7 1190.0 400.0" fill="none" stroke="#FFFFFF" stroke-width="2.4" opacity="0.55"/>
<path d="M1172.7 286.0 C1174.8 287.2 1181.8 290.7 1185.0 293.0 C1188.2 295.3 1190.5 297.9 1192.0 300.0 C1193.5 302.1 1192.8 303.5 1193.7 305.3 C1194.6 307.1 1195.6 307.8 1197.2 310.6 C1198.8 313.4 1201.8 318.9 1203.3 322.0 C1204.8 325.1 1206.0 326.4 1206.0 329.0 C1206.0 331.6 1204.3 334.9 1203.3 337.7 C1202.3 340.5 1200.1 342.8 1199.8 345.6 C1199.5 348.4 1201.9 351.4 1201.6 354.3 C1201.3 357.2 1199.3 358.7 1198.0 363.0 C1196.7 367.3 1195.0 373.8 1193.7 380.0 C1192.4 386.2 1190.6 396.7 1190.0 400.0" fill="none" stroke="#F39A4C" stroke-width="1.3"/>
<path d="M1175.3 315.0 C1175.9 313.4 1176.0 307.6 1178.8 305.3 C1181.6 303.0 1189.8 301.7 1192.0 301.0" fill="none" stroke="#FFFFFF" stroke-width="2.4" opacity="0.55"/>
<path d="M1175.3 315.0 C1175.9 313.4 1176.0 307.6 1178.8 305.3 C1181.6 303.0 1189.8 301.7 1192.0 301.0" fill="none" stroke="#F39A4C" stroke-width="1.3"/>
<path d="M1227.8 314.0 C1229.4 312.4 1234.5 309.2 1237.4 304.5 C1240.3 299.8 1244.0 289.1 1245.3 286.0" fill="none" stroke="#FFFFFF" stroke-width="2.4" opacity="0.55"/>
<path d="M1227.8 314.0 C1229.4 312.4 1234.5 309.2 1237.4 304.5 C1240.3 299.8 1244.0 289.1 1245.3 286.0" fill="none" stroke="#F39A4C" stroke-width="1.3"/>
<path d="M1214.0 323.0 C1214.5 323.0 1216.7 322.3 1217.0 323.0 C1217.3 323.7 1217.2 325.3 1216.0 327.0 C1214.8 328.7 1211.7 332.3 1210.0 333.0 C1208.3 333.7 1206.7 331.3 1206.0 331.0" fill="none" stroke="#FFFFFF" stroke-width="2.4" opacity="0.55"/>
<path d="M1214.0 323.0 C1214.5 323.0 1216.7 322.3 1217.0 323.0 C1217.3 323.7 1217.2 325.3 1216.0 327.0 C1214.8 328.7 1211.7 332.3 1210.0 333.0 C1208.3 333.7 1206.7 331.3 1206.0 331.0" fill="none" stroke="#F39A4C" stroke-width="1.3"/>
<path d="M1287.0 286.0 C1288.7 289.7 1291.8 302.3 1297.0 308.0 C1302.2 313.7 1310.0 317.2 1318.0 320.0 C1326.0 322.8 1340.2 320.8 1345.0 325.0 C1349.8 329.2 1344.5 340.2 1347.0 345.0 C1349.5 349.8 1352.8 355.7 1360.0 354.0 C1367.2 352.3 1380.0 338.0 1390.0 335.0 C1400.0 332.0 1408.3 334.5 1420.0 336.0 C1431.7 337.5 1447.8 341.3 1460.0 344.0 C1472.2 346.7 1484.7 353.5 1493.0 352.0 C1501.3 350.5 1503.8 341.2 1510.0 335.0 C1516.2 328.8 1524.2 321.2 1530.0 315.0 C1535.8 308.8 1540.0 302.8 1545.0 298.0 C1550.0 293.2 1557.5 288.0 1560.0 286.0" fill="none" stroke="#FFFFFF" stroke-width="2.4" opacity="0.55"/>
<path d="M1287.0 286.0 C1288.7 289.7 1291.8 302.3 1297.0 308.0 C1302.2 313.7 1310.0 317.2 1318.0 320.0 C1326.0 322.8 1340.2 320.8 1345.0 325.0 C1349.8 329.2 1344.5 340.2 1347.0 345.0 C1349.5 349.8 1352.8 355.7 1360.0 354.0 C1367.2 352.3 1380.0 338.0 1390.0 335.0 C1400.0 332.0 1408.3 334.5 1420.0 336.0 C1431.7 337.5 1447.8 341.3 1460.0 344.0 C1472.2 346.7 1484.7 353.5 1493.0 352.0 C1501.3 350.5 1503.8 341.2 1510.0 335.0 C1516.2 328.8 1524.2 321.2 1530.0 315.0 C1535.8 308.8 1540.0 302.8 1545.0 298.0 C1550.0 293.2 1557.5 288.0 1560.0 286.0" fill="none" stroke="#F39A4C" stroke-width="1.3"/>
<path d="M1507.0 286.0 C1506.8 290.0 1506.7 301.8 1506.0 310.0 C1505.3 318.2 1504.0 326.7 1503.0 335.0 C1502.0 343.3 1500.5 350.8 1500.0 360.0 C1499.5 369.2 1499.7 380.0 1500.0 390.0 C1500.3 400.0 1501.3 410.0 1502.0 420.0 C1502.7 430.0 1503.0 440.8 1504.0 450.0 C1505.0 459.2 1506.7 467.5 1508.0 475.0 C1509.3 482.5 1506.7 490.8 1512.0 495.0 C1517.3 499.2 1532.0 498.8 1540.0 500.0 C1548.0 501.2 1556.7 501.7 1560.0 502.0" fill="none" stroke="#FFFFFF" stroke-width="2.4" opacity="0.55"/>
<path d="M1507.0 286.0 C1506.8 290.0 1506.7 301.8 1506.0 310.0 C1505.3 318.2 1504.0 326.7 1503.0 335.0 C1502.0 343.3 1500.5 350.8 1500.0 360.0 C1499.5 369.2 1499.7 380.0 1500.0 390.0 C1500.3 400.0 1501.3 410.0 1502.0 420.0 C1502.7 430.0 1503.0 440.8 1504.0 450.0 C1505.0 459.2 1506.7 467.5 1508.0 475.0 C1509.3 482.5 1506.7 490.8 1512.0 495.0 C1517.3 499.2 1532.0 498.8 1540.0 500.0 C1548.0 501.2 1556.7 501.7 1560.0 502.0" fill="none" stroke="#F39A4C" stroke-width="1.3"/>
<path d="M1493.0 352.0 C1494.2 353.7 1495.5 359.0 1500.0 362.0 C1504.5 365.0 1513.3 368.3 1520.0 370.0 C1526.7 371.7 1533.3 370.0 1540.0 372.0 C1546.7 374.0 1556.7 380.3 1560.0 382.0" fill="none" stroke="#FFFFFF" stroke-width="2.4" opacity="0.55"/>
<path d="M1493.0 352.0 C1494.2 353.7 1495.5 359.0 1500.0 362.0 C1504.5 365.0 1513.3 368.3 1520.0 370.0 C1526.7 371.7 1533.3 370.0 1540.0 372.0 C1546.7 374.0 1556.7 380.3 1560.0 382.0" fill="none" stroke="#F39A4C" stroke-width="1.3"/>
<path d="M1497.0 358.0 C1494.2 360.8 1486.2 369.3 1480.0 375.0 C1473.8 380.7 1466.7 387.5 1460.0 392.0 C1453.3 396.5 1443.3 400.3 1440.0 402.0" fill="none" stroke="#FFFFFF" stroke-width="2.4" opacity="0.55"/>
<path d="M1497.0 358.0 C1494.2 360.8 1486.2 369.3 1480.0 375.0 C1473.8 380.7 1466.7 387.5 1460.0 392.0 C1453.3 396.5 1443.3 400.3 1440.0 402.0" fill="none" stroke="#F39A4C" stroke-width="1.3"/>
<path d="M1560.0 402.0 C1557.5 406.7 1550.0 421.2 1545.0 430.0 C1540.0 438.8 1532.5 450.8 1530.0 455.0" fill="none" stroke="#FFFFFF" stroke-width="2.4" opacity="0.55"/>
<path d="M1560.0 402.0 C1557.5 406.7 1550.0 421.2 1545.0 430.0 C1540.0 438.8 1532.5 450.8 1530.0 455.0" fill="none" stroke="#F39A4C" stroke-width="1.3"/>
<path d="M1252.0 472.0 C1250.7 474.2 1247.2 480.0 1244.0 485.0 C1240.8 490.0 1235.0 496.2 1233.0 502.0 C1231.0 507.8 1230.8 512.8 1232.0 520.0 C1233.2 527.2 1239.3 537.5 1240.0 545.0 C1240.7 552.5 1238.3 557.5 1236.0 565.0 C1233.7 572.5 1229.3 582.5 1226.0 590.0 C1222.7 597.5 1219.5 604.5 1216.0 610.0 C1212.5 615.5 1210.3 619.5 1205.0 623.0 C1199.7 626.5 1189.0 628.8 1184.0 631.0 C1179.0 633.2 1176.5 635.2 1175.0 636.0" fill="none" stroke="#FFFFFF" stroke-width="2.4" opacity="0.55"/>
<path d="M1252.0 472.0 C1250.7 474.2 1247.2 480.0 1244.0 485.0 C1240.8 490.0 1235.0 496.2 1233.0 502.0 C1231.0 507.8 1230.8 512.8 1232.0 520.0 C1233.2 527.2 1239.3 537.5 1240.0 545.0 C1240.7 552.5 1238.3 557.5 1236.0 565.0 C1233.7 572.5 1229.3 582.5 1226.0 590.0 C1222.7 597.5 1219.5 604.5 1216.0 610.0 C1212.5 615.5 1210.3 619.5 1205.0 623.0 C1199.7 626.5 1189.0 628.8 1184.0 631.0 C1179.0 633.2 1176.5 635.2 1175.0 636.0" fill="none" stroke="#F39A4C" stroke-width="1.3"/>
<path d="M1175.0 659.0 C1177.5 660.2 1185.0 664.3 1190.0 666.0 C1195.0 667.7 1196.7 667.0 1205.0 669.0 C1213.3 671.0 1230.0 676.0 1240.0 678.0 C1250.0 680.0 1255.5 680.2 1265.0 681.0 C1274.5 681.8 1288.5 684.3 1297.0 683.0 C1305.5 681.7 1307.3 675.3 1316.0 673.0 C1324.7 670.7 1341.8 672.2 1349.0 669.0 C1356.2 665.8 1354.2 656.5 1359.0 654.0 C1363.8 651.5 1369.8 657.0 1378.0 654.0 C1386.2 651.0 1401.0 641.0 1408.0 636.0 C1415.0 631.0 1413.2 627.7 1420.0 624.0 C1426.8 620.3 1441.3 617.2 1449.0 614.0 C1456.7 610.8 1459.8 606.7 1466.0 605.0 C1472.2 603.3 1480.8 605.8 1486.0 604.0 C1491.2 602.2 1492.7 596.7 1497.0 594.0 C1501.3 591.3 1506.0 589.5 1512.0 588.0 C1518.0 586.5 1527.5 587.0 1533.0 585.0 C1538.5 583.0 1540.5 580.2 1545.0 576.0 C1549.5 571.8 1557.5 562.7 1560.0 560.0" fill="none" stroke="#FFFFFF" stroke-width="2.4" opacity="0.55"/>
<path d="M1175.0 659.0 C1177.5 660.2 1185.0 664.3 1190.0 666.0 C1195.0 667.7 1196.7 667.0 1205.0 669.0 C1213.3 671.0 1230.0 676.0 1240.0 678.0 C1250.0 680.0 1255.5 680.2 1265.0 681.0 C1274.5 681.8 1288.5 684.3 1297.0 683.0 C1305.5 681.7 1307.3 675.3 1316.0 673.0 C1324.7 670.7 1341.8 672.2 1349.0 669.0 C1356.2 665.8 1354.2 656.5 1359.0 654.0 C1363.8 651.5 1369.8 657.0 1378.0 654.0 C1386.2 651.0 1401.0 641.0 1408.0 636.0 C1415.0 631.0 1413.2 627.7 1420.0 624.0 C1426.8 620.3 1441.3 617.2 1449.0 614.0 C1456.7 610.8 1459.8 606.7 1466.0 605.0 C1472.2 603.3 1480.8 605.8 1486.0 604.0 C1491.2 602.2 1492.7 596.7 1497.0 594.0 C1501.3 591.3 1506.0 589.5 1512.0 588.0 C1518.0 586.5 1527.5 587.0 1533.0 585.0 C1538.5 583.0 1540.5 580.2 1545.0 576.0 C1549.5 571.8 1557.5 562.7 1560.0 560.0" fill="none" stroke="#F39A4C" stroke-width="1.3"/>
<path d="M1184.0 666.0 C1185.0 670.3 1189.0 684.5 1190.0 692.0 C1191.0 699.5 1191.7 706.2 1190.0 711.0 C1188.3 715.8 1182.5 718.8 1180.0 721.0 C1177.5 723.2 1175.8 723.5 1175.0 724.0" fill="none" stroke="#FFFFFF" stroke-width="2.4" opacity="0.55"/>
<path d="M1184.0 666.0 C1185.0 670.3 1189.0 684.5 1190.0 692.0 C1191.0 699.5 1191.7 706.2 1190.0 711.0 C1188.3 715.8 1182.5 718.8 1180.0 721.0 C1177.5 723.2 1175.8 723.5 1175.0 724.0" fill="none" stroke="#F39A4C" stroke-width="1.3"/>
<path d="M1217.0 735.0 C1223.0 735.0 1244.3 739.8 1253.0 735.0 C1261.7 730.2 1261.7 714.3 1269.0 706.0 C1276.3 697.7 1292.3 688.5 1297.0 685.0" fill="none" stroke="#FFFFFF" stroke-width="2.4" opacity="0.55"/>
<path d="M1217.0 735.0 C1223.0 735.0 1244.3 739.8 1253.0 735.0 C1261.7 730.2 1261.7 714.3 1269.0 706.0 C1276.3 697.7 1292.3 688.5 1297.0 685.0" fill="none" stroke="#F39A4C" stroke-width="1.3"/>
<path d="M1414.6 286.0 L1411.1 293.0 L1405.9 297.4 L1409.4 311.3 L1398.9 321.0 L1397.2 318.3 L1385.8 321.0 L1382.3 328.8 L1375.3 329.7 L1374.4 336.7 L1368.3 338.4 L1356.9 331.5 L1351.7 335.8 L1344.7 335.4 L1336.8 342.0 L1342.9 349.0 L1343.8 359.4 L1354.3 361.2 L1356.0 371.7 L1354.3 377.8 L1366.7 389.0 L1385.8 396.2 L1393.0 405.8 L1400.2 425.0 L1385.8 429.7 L1381.0 439.3 L1371.4 453.7 L1381.0 477.7 L1376.2 484.9 L1381.0 496.8 L1390.6 511.2 L1414.6 525.6 L1429.0 532.8 L1450.5 537.5 L1469.7 535.2 L1486.5 530.4 L1490.0 545.0 L1488.0 556.0 L1484.0 569.0 L1472.0 579.0 L1470.0 586.0 L1463.0 590.0 L1461.0 593.0 L1465.0 607.0" fill="none" stroke="#7C8AA2" stroke-width="1.6" stroke-linejoin="round"/>
<path d="M927.0 676.0 L940.0 676.0 L1000.0 690.0 L1100.0 712.0 L1175.0 718.8 L1189.0 722.0 L1203.0 728.0 L1212.0 738.0 L1219.6 746.5 L1226.7 748.9 L1238.5 739.4 L1252.6 744.0 L1264.4 753.6 L1271.5 746.5 L1285.0 740.0 L1301.0 734.5 L1316.6 729.8 L1329.0 725.0 L1341.8 718.8 L1345.0 707.8 L1332.0 707.8 L1340.0 701.5 L1348.0 690.5 L1352.8 679.5 L1367.0 676.3 L1379.6 667.0 L1385.9 654.4 L1401.6 648.0 L1411.0 634.0 L1425.0 627.6 L1436.8 619.0 L1453.3 614.3 L1465.0 607.2 L1486.5 606.7 L1497.5 596.3 L1512.2 590.2 L1533.0 587.7 L1545.3 579.2 L1553.0 572.0 L1560.0 562.0 L1560.0 831.0 L927.0 831.0 Z" fill="#75CDEE"/>
<path d="M1262 757 L1270 756 L1268 760 Z M1289 762 L1296 758 L1300 756 L1297 761 Z M1311 753 L1318 748 L1316 753 Z" fill="#ECE8DC"/>
<text x="1182.7" y="320.3" font-family="Liberation Sans" font-size="12.5" font-weight="400" letter-spacing="0.3" fill="#2F3438" stroke="#FFFFFF" stroke-width="2" stroke-opacity="0.45" paint-order="stroke" >Grenoble</text>
<text x="1312.8" y="308.8" font-family="Liberation Sans" font-size="12.5" font-weight="400" letter-spacing="0.05" fill="#3E8A2E" stroke="#FFFFFF" stroke-width="2" stroke-opacity="0.45" paint-order="stroke" >Vanoise National Park</text>
<text x="1480.5" y="316.7" font-family="Liberation Sans" font-size="12.5" font-weight="400" letter-spacing="0.2" fill="#2F3438" stroke="#FFFFFF" stroke-width="2" stroke-opacity="0.45" paint-order="stroke" >Settimo</text>
<text x="1479" y="329.8" font-family="Liberation Sans" font-size="12.5" font-weight="400" letter-spacing="0.2" fill="#2F3438" stroke="#FFFFFF" stroke-width="2" stroke-opacity="0.45" paint-order="stroke" >Torinese</text>
<text x="1234.4" y="413" font-family="Liberation Sans" font-size="12.5" font-weight="400" letter-spacing="0.05" fill="#3E8A2E" stroke="#FFFFFF" stroke-width="2" stroke-opacity="0.45" paint-order="stroke" >Écrins National Park</text>
<text x="1450.5" y="479.6" font-family="Liberation Sans" font-size="12.5" font-weight="400" letter-spacing="0.3" fill="#2F3438" stroke="#FFFFFF" stroke-width="2" stroke-opacity="0.45" paint-order="stroke" >Cuneo</text>
<text x="1236.5" y="539.8" font-family="Liberation Sans" font-size="12.5" font-weight="400" letter-spacing="0.1" fill="#2F3438" stroke="#FFFFFF" stroke-width="2" stroke-opacity="0.45" paint-order="stroke" >Digne-les-Bains</text>
<text x="1351" y="550.7" font-family="Liberation Sans" font-size="12.5" font-weight="400" letter-spacing="0.1" fill="#3E8A2E" stroke="#FFFFFF" stroke-width="2" stroke-opacity="0.45" paint-order="stroke" >Mercantour</text>
<text x="1345" y="565" font-family="Liberation Sans" font-size="12.5" font-weight="400" letter-spacing="0.05" fill="#3E8A2E" stroke="#FFFFFF" stroke-width="2" stroke-opacity="0.45" paint-order="stroke" >National Park</text>
<text x="1515" y="580.8" font-family="Liberation Sans" font-size="12.5" font-weight="400" letter-spacing="0.2" fill="#2F3438" stroke="#FFFFFF" stroke-width="2" stroke-opacity="0.45" paint-order="stroke" >Imperia</text>
<text x="1371.4" y="646.9" font-family="Liberation Sans" font-size="12.5" font-weight="400" letter-spacing="0.3" fill="#2F3438" stroke="#FFFFFF" stroke-width="2" stroke-opacity="0.45" paint-order="stroke" >Cannes</text>
<text x="1218.9" y="729.5" font-family="Liberation Sans" font-size="12.5" font-weight="400" letter-spacing="0.3" fill="#2F3438" stroke="#FFFFFF" stroke-width="2" stroke-opacity="0.45" paint-order="stroke" >Toulon</text>
<text x="1553" y="377" font-family="Liberation Sans" font-size="12.5" font-weight="400" letter-spacing="0" fill="#2F3438" stroke="#FFFFFF" stroke-width="2" stroke-opacity="0.45" paint-order="stroke" >A</text>
<text x="1250" y="446" font-family="Liberation Sans" font-size="12.5" font-weight="400" letter-spacing="0" fill="#2F3438" stroke="#FFFFFF" stroke-width="2" stroke-opacity="0.45" paint-order="stroke" >Gap</text>
<text x="1175" y="635.5" font-family="Liberation Sans" font-size="12.5" font-weight="400" letter-spacing="0" fill="#2F3438" stroke="#FFFFFF" stroke-width="2" stroke-opacity="0.45" paint-order="stroke" >en-</text>
<text x="1180.6" y="651" font-family="Liberation Sans" font-size="12.5" font-weight="400" letter-spacing="0" fill="#2F3438" stroke="#FFFFFF" stroke-width="2" stroke-opacity="0.45" paint-order="stroke" >ce</text>
<text x="1454" y="630.8" font-family="Liberation Sans" font-size="16" font-weight="700" fill="#111" stroke="#FFFFFF" stroke-width="2.4" stroke-opacity="0.8" paint-order="stroke">Monaco</text>
<text x="935.8" y="763.2" font-family="Liberation Sans" font-size="14" font-style="italic" letter-spacing="2.6" fill="#D4EEF9" fill-opacity="0.9">Gulf of</text>
<text x="947.3" y="786.9" font-family="Liberation Sans" font-size="14" font-style="italic" letter-spacing="3.4" fill="#D4EEF9" fill-opacity="0.9">Lion</text>
<circle cx="1208.5" cy="326.5" r="2.1" fill="#111" stroke="#fff" stroke-width="0.8"/>
<circle cx="1500" cy="336" r="2.1" fill="#111" stroke="#fff" stroke-width="0.8"/>
<circle cx="1468" cy="486.5" r="2.1" fill="#111" stroke="#fff" stroke-width="0.8"/>
<circle cx="1281" cy="546" r="2.1" fill="#111" stroke="#fff" stroke-width="0.8"/>
<circle cx="1536.7" cy="587" r="2.1" fill="#111" stroke="#fff" stroke-width="0.8"/>
<circle cx="1391.8" cy="653" r="2.1" fill="#111" stroke="#fff" stroke-width="0.8"/>
<circle cx="1449.5" cy="614" r="2.1" fill="#111" stroke="#fff" stroke-width="0.8"/>
<circle cx="1237.6" cy="736.5" r="2.1" fill="#111" stroke="#fff" stroke-width="0.8"/>
<circle cx="1259" cy="451" r="2.1" fill="#111" stroke="#fff" stroke-width="0.8"/>
<rect x="1488.5" y="410.5" width="19" height="12.5" rx="2.5" fill="#fff" stroke="#333" stroke-width="1.2"/>
<text x="1491.3" y="420.5" font-family="Liberation Sans" font-size="9.5" font-weight="700" fill="#333">A6</text>
<rect x="1501" y="281" width="18.5" height="13" rx="2.5" fill="#fff" stroke="#333" stroke-width="1.2"/>
<text x="1503.5" y="292" font-family="Liberation Sans" font-size="9.5" font-weight="700" fill="#333">A5</text>
<rect x="1220.5" y="511" width="30" height="12.5" rx="2" fill="#D0312D"/>
<text x="1224.5" y="521" font-family="Liberation Sans" font-size="9.5" font-weight="700" fill="#fff" letter-spacing="0.6">A 51</text>
<g fill="#2F7D32" transform="translate(1368,290) scale(1.0)"><circle cx="0" cy="-4" r="3.6"/><circle cx="-3.3" cy="-2" r="2.6"/><circle cx="3.3" cy="-2" r="2.6"/><rect x="-0.7" y="-1" width="1.4" height="6"/><rect x="-2.4" y="4.3" width="4.8" height="1"/></g>
<g fill="#2F7D32" transform="translate(1286,393) scale(1.05)"><circle cx="0" cy="-4" r="3.6"/><circle cx="-3.3" cy="-2" r="2.6"/><circle cx="3.3" cy="-2" r="2.6"/><rect x="-0.7" y="-1" width="1.4" height="6"/><rect x="-2.4" y="4.3" width="4.8" height="1"/></g>
<g fill="#2F7D32" transform="translate(1380,530) scale(1.0)"><circle cx="0" cy="-4" r="3.6"/><circle cx="-3.3" cy="-2" r="2.6"/><circle cx="3.3" cy="-2" r="2.6"/><rect x="-0.7" y="-1" width="1.4" height="6"/><rect x="-2.4" y="4.3" width="4.8" height="1"/></g>
<path d="M1240.0 390.5 C1237.5 386.6 1233.0 381.9 1233.0 378.0 A7.0 7.0 0 1 1 1247.0 378.0 C1247.0 381.9 1242.5 386.6 1240.0 390.5 Z" fill="#3F8A3A"/><circle cx="1240.0" cy="378.0" r="2.2" fill="#BFD3BD" opacity="0.85"/>
<path d="M1259.0 398.5 C1256.5 394.6 1252.0 389.9 1252.0 386.0 A7.0 7.0 0 1 1 1266.0 386.0 C1266.0 389.9 1261.5 394.6 1259.0 398.5 Z" fill="#E0201E"/><circle cx="1259.0" cy="386.0" r="2.2" fill="#F3C9C6" opacity="0.85"/>
<path d="M1259.2 451.0 C1256.0 445.7 1250.0 438.8 1250.0 433.8 A9.2 9.2 0 1 1 1268.5 433.8 C1268.5 438.8 1262.5 445.7 1259.2 451.0 Z" fill="#FFAA00"/><circle cx="1259.2" cy="433.8" r="3.3" fill="#F57C00" opacity="0.85"/>
<path d="M1445.2 604.8 C1442.8 600.8 1438.4 595.3 1438.4 591.6 A6.8 6.8 0 1 1 1452.0 591.6 C1452.0 595.3 1447.6 600.8 1445.2 604.8 Z" fill="#E0201E"/><circle cx="1445.2" cy="591.6" r="2.2" fill="#F3C9C6" opacity="0.85"/>
<path d="M1175.0 657.0 C1172.5 653.0 1168.0 647.9 1168.0 644.0 A7.0 7.0 0 1 1 1182.0 644.0 C1182.0 647.9 1177.5 653.0 1175.0 657.0 Z" fill="#3F8A3A"/><circle cx="1175.0" cy="644.0" r="2.2" fill="#3F8A3A" opacity="0.85"/>
</g></svg><div style="position:absolute;left:932px;top:297px;width:243px;height:436px;background:#fff;border-radius:4px;box-shadow:0 1px 3px rgba(0,0,0,0.12)"></div>
<svg style="left:942px;top:321px" width="223" height="52" viewBox="0 0 223 52">
<defs>
<clipPath id="ph"><rect x="0" y="0" width="223" height="52" rx="4"/></clipPath>
<linearGradient id="sky" x1="0" y1="0" x2="1" y2="0.4"><stop offset="0" stop-color="#7BA3D8"/><stop offset="0.5" stop-color="#5A94E2"/><stop offset="1" stop-color="#4F8CDF"/></linearGradient>
</defs>
<g clip-path="url(#ph)">
<rect width="223" height="52" fill="url(#sky)"/>
<g stroke="#5F6E80" stroke-width="0.8" fill="none" opacity="0.7">
<line x1="22" y1="48" x2="225" y2="8"/><line x1="48" y1="30" x2="80" y2="60"/><line x1="112" y1="8" x2="140" y2="45"/><line x1="205" y1="3" x2="225" y2="25"/>
</g>
<path d="M86 52 L225 21 L225 52 Z" fill="#8B9DB3"/>
<g stroke="#6F8299" stroke-width="1.1">
<line x1="110" y1="47" x2="110" y2="52"/><line x1="120" y1="45" x2="120" y2="52"/><line x1="130" y1="43" x2="130" y2="52"/><line x1="140" y1="41" x2="140" y2="52"/><line x1="150" y1="38" x2="150" y2="52"/><line x1="160" y1="36" x2="160" y2="52"/><line x1="170" y1="34" x2="170" y2="52"/><line x1="180" y1="32" x2="180" y2="52"/><line x1="190" y1="30" x2="190" y2="52"/><line x1="200" y1="27" x2="200" y2="52"/><line x1="210" y1="25" x2="210" y2="52"/><line x1="220" y1="23" x2="220" y2="52"/>
</g>
<rect x="192" y="6" width="3.5" height="46" fill="#A8B6C6"/>
<path d="M131 3 L151 2 L148 20 L155 31 L141 16 Z" fill="#C62E2B"/>
<path d="M166 2 L186 2 C178 6 177 14 182 18 C186 21 190 19 191 16 L195 22 C188 27 170 28 164 18 C161 12 162 6 166 2 Z" fill="#1A2F8C"/>
<path d="M197 2 L210 2 L199 21 L196 19 Z" fill="#1A2F8C"/>
<text x="0" y="0" transform="translate(20,37) rotate(-15)" font-family="Liberation Sans" font-style="italic" font-weight="700" font-size="21" fill="none" stroke="#B9D2F4" stroke-width="3.2" stroke-linejoin="round" letter-spacing="-1" textLength="100">Carrefour</text>
<text x="0" y="0" transform="translate(20,37) rotate(-15)" font-family="Liberation Sans" font-style="italic" font-weight="700" font-size="21" fill="#1A3890" stroke="#1A3890" stroke-width="1.4" stroke-linejoin="round" letter-spacing="-1" textLength="100">Carrefour</text>
<text x="0" y="0" transform="translate(44,60) rotate(-25)" font-family="Liberation Sans" font-style="italic" font-weight="700" font-size="25" fill="#C0272D" stroke="#9E1F24" stroke-width="0.8" letter-spacing="-1.2" textLength="82">market</text>
</g>
</svg>
<div class="a" style="left:948.7px;top:389.4px;font-size:16px;font-weight:700;color:#1F2D38;letter-spacing:0.6px">Carrefour Market Gap</div>
<div class="a" style="left:948.7px;top:412.4px;font-size:12px;color:#5A7486;letter-spacing:0.05px">Rue de Provence 3, 5000 Gap</div>
<svg style="left:0;top:0" width="1" height="1">
<circle cx="965" cy="470" r="10" fill="#43A047"/>
<polyline points="959.8,470.3 963.3,473.8 970.3,466.6" fill="none" stroke="#fff" stroke-width="2.2" stroke-linecap="round" stroke-linejoin="round"/>
<path d="M965 557.5 L976.5 576.5 L953.5 576.5 Z" fill="#F57C00" stroke="#F57C00" stroke-width="1" stroke-linejoin="round"/>
<rect x="964" y="563.5" width="2" height="6" fill="#fff"/>
<rect x="964" y="571" width="2" height="2" fill="#fff"/>
</svg>
<div class="a" style="left:1009.6px;top:452.8px;font-size:14px;color:#222">DNI 1123</div>
<div class="a" style="left:1009.6px;top:472.9px;font-size:14px;color:#6B6B6B;letter-spacing:0.14px">Negative plant n ° 12</div>
<div class="a" style="left:1047.3px;top:497.6px;font-size:14px;color:#1E4E79;letter-spacing:0.1px">To DNI 1123</div>
<div class="hr" style="left:948px;top:527px;width:209px;background:#E3E3E3"></div>
<div class="a" style="left:1009.6px;top:550.1px;font-size:14px;color:#222">DNI 1125</div>
<div class="a" style="left:1009.6px;top:569.7px;font-size:14px;color:#6B6B6B;letter-spacing:0.14px">Negative plant &nbsp;n ° 15</div>
<div class="a" style="left:1047.3px;top:595.7px;font-size:14px;color:#1E4E79;letter-spacing:0.1px">To DNI 1125</div>
<div class="hr" style="left:932px;top:627px;width:243px;background:#E8E8E8"></div>
<div class="a" style="left:943.3px;top:635.6px;font-size:16px;color:#333;letter-spacing:1.2px">Refrigeration engineer</div>
<div style="position:absolute;left:958px;top:667px;width:40px;height:40px;border-radius:50%;overflow:hidden;background:#E4EEF7;border:1px solid #D5DEE6">
<svg style="left:-1px;top:-1px" width="40" height="40" viewBox="0 0 40 40">
<path d="M4 37 C7 30 12 28 20 28 C28 28 33 30 36 37 L36 40 L4 40 Z" fill="#3A61A6"/>
<path d="M16 24 L24 24 L24 30 C22 32 18 32 16 30 Z" fill="#F3C9B5"/>
<ellipse cx="20" cy="18" rx="7" ry="8.5" fill="#FADBCB"/>
<path d="M12.5 17 C12 10 15 6.5 20 6.5 C25.5 6.5 28 10 27.5 17 C26.5 13 25 12 20 12 C15 12 13.5 13 12.5 17 Z" fill="#151515"/>
</svg></div>
<div class="a" style="left:1014.4px;top:672.2px;font-size:14px;color:#222">James bakry</div>
<div class="a" style="left:1014.4px;top:692.3px;font-size:14px;color:#6B6B6B;letter-spacing:0.1px">Congelosud</div>
</body></html>
